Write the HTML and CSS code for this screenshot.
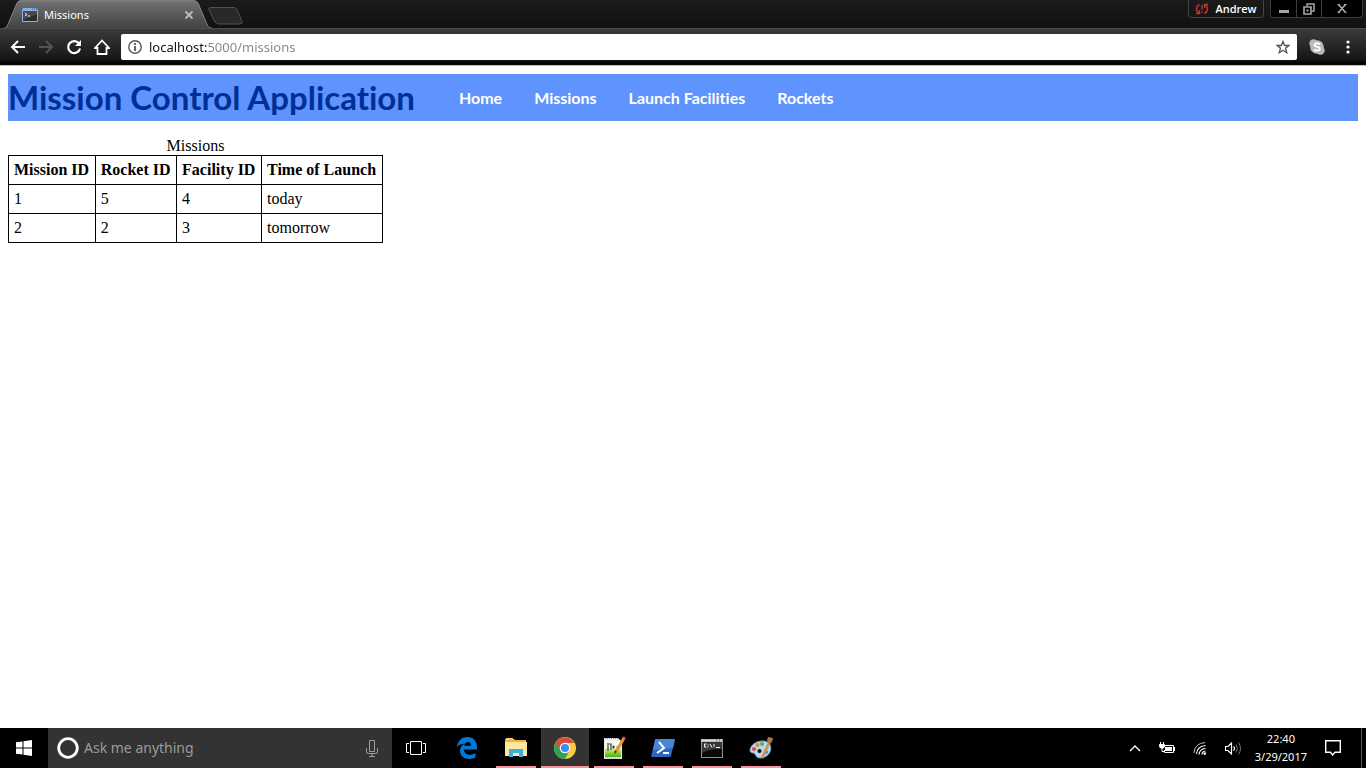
FILE: index.html
```html
<!DOCTYPE html>
<html lang="en">
<head>
<meta charset="utf-8">
<title>Missions</title>
<link rel="stylesheet" href="styles.css">
</head>
<body>
<div class="desktop">
  <header class="chrome">
    <div class="tabs">
      <div class="tab">
        <svg class="tab-shape" width="212" height="28" viewBox="0 0 212 28" aria-hidden="true">
          <defs><linearGradient id="tabfill" x1="0" y1="0" x2="0" y2="1"><stop offset="0" stop-color="#737373"/><stop offset="1" stop-color="#434343"/></linearGradient></defs>
          <path d="M4 28C6 28 7 27 9 22L17 3Q18 0 21 0H193Q197 0 198 3L206 22C208 27 209 28 212 28Z" fill="url(#tabfill)"/>
          <path d="M4 28C6 28 7 27 9 22L17 3Q18 1 21 1H193Q197 1 198 3L206 22C208 27 209 28 212 28" fill="none" stroke="#858585"/>
        </svg>
        <div class="tab-content">
          <svg width="16" height="14" viewBox="0 0 16 14" aria-hidden="true"><rect width="16" height="14" rx="1" fill="#8fb1dd"/><rect y="0" width="16" height="2" fill="#5581bd"/><path d="M1 1h9M11 1h1M13 1h1" stroke="#bcd7fa"/><path d="M1 3h14v10H1Z" fill="#292d32"/><path d="M1 3h14v3L1 12Z" fill="#464a50"/><path d="M3 5l2 1.500L3 8M6 8h2" fill="none" stroke="#fff"/></svg>
          <span class="tab-title">Missions</span>
          <button class="plain close" aria-label="Close tab"><svg width="10" height="10" viewBox="0 0 10 10"><path d="M1.500 1.500l7 7M8.500 1.500l-7 7" stroke="#bdbdbd" stroke-width="1.800"/></svg></button>
        </div>
      </div>
      <button class="plain newtab" aria-label="New tab"><svg width="36" height="18" viewBox="0 0 36 18"><path d="M3 .5H26Q28 .5 29 3L34 14Q35 17 32 17H11Q8 17 7 15L1 3Q0 .5 3 .5Z" fill="#292929" stroke="#515151"/></svg></button>
      <div class="window-controls">
        <button class="plain user"><svg width="14" height="12" viewBox="0 0 14 12" aria-hidden="true"><path d="M4.500 1.500Q1.500 3 1.500 6Q1.500 8.500 4 10M1 10.500h3.500v-3.500M9.500 10.500Q12.500 9 12.500 6Q12.500 3.500 10 2M13 1.500H9.500V5" fill="none" stroke="#c43529" stroke-width="1.400"/><path d="M7 2v5M7 8.500v1.500" stroke="#c43529" stroke-width="1.400"/></svg><span>Andrew</span></button>
        <div class="window-buttons">
          <button class="plain" aria-label="Minimize"><svg width="12" height="12" viewBox="0 0 12 12"><path d="M1 8.500h10" stroke="#a5a5a5" stroke-width="3"/></svg></button>
          <button class="plain" aria-label="Restore"><svg width="12" height="12" viewBox="0 0 12 12"><path d="M4 3V1h7v7H9" fill="none" stroke="#a5a5a5" stroke-width="1.500"/><path d="M1 4h7v7H1Z" fill="none" stroke="#a5a5a5" stroke-width="1.700"/><path d="M3.500 6.500h2v2h-2Z" fill="#a5a5a5"/></svg></button>
          <button class="plain wide" aria-label="Close"><svg width="10" height="9" viewBox="0 0 10 9"><path d="M1.500 .5l7 8M8.500 .5l-7 8M.5 .5h2.500M7 .5h2.500M.5 8.500h2.500M7 8.500h2.500" stroke="#aaa" stroke-width="1.600"/></svg></button>
        </div>
      </div>
    </div>
    <div class="toolbar">
      <button class="plain" aria-label="Back"><svg width="16" height="16" viewBox="0 0 16 16"><path d="M15 8H2M8 2L2 8l6 6" fill="none" stroke="#fff" stroke-width="2"/></svg></button>
      <button class="plain" aria-label="Forward"><svg width="16" height="16" viewBox="0 0 16 16"><path d="M1 8h13M8 2l6 6-6 6" fill="none" stroke="#565656" stroke-width="2"/></svg></button>
      <button class="plain" aria-label="Reload"><svg width="16" height="16" viewBox="0 0 16 16"><path d="M13 4.500A6 6 0 1 0 14 9.500" fill="none" stroke="#fff" stroke-width="2.200"/><path d="M15 1v6H9Z" fill="#fff"/></svg></button>
      <button class="plain" aria-label="Home"><svg width="16" height="16" viewBox="0 0 16 16"><path d="M1 9l7-7.500L15 9h-2.500v6h-9V9Z" fill="none" stroke="#fff" stroke-width="1.800"/></svg></button>
      <div class="address">
        <svg width="14" height="14" viewBox="0 0 14 14" aria-hidden="true"><circle cx="7" cy="7" r="6.200" fill="none" stroke="#555" stroke-width="1.400"/><path d="M7 3v2M7 6v5" stroke="#555" stroke-width="1.800"/></svg>
        <input class="url" type="text" value="localhost:5000/missions" aria-label="Address">
        <button class="plain" aria-label="Bookmark"><svg width="14" height="14" viewBox="0 0 14 14"><path d="M7 1.500l1.600 4h4.300L9.500 8.200l1.300 4.500L7 10.200l-3.800 2.500 1.300-4.500L1.100 5.500h4.300Z" fill="none" stroke="#555" stroke-width="1.300"/></svg></button>
      </div>
      <button class="plain" aria-label="Skype"><svg width="16" height="16" viewBox="0 0 16 16"><circle cx="8" cy="8" r="6.800" fill="#b9b9b9"/><circle cx="4.500" cy="4.500" r="4.200" fill="#b9b9b9"/><circle cx="11.500" cy="11.500" r="4.200" fill="#b9b9b9"/><path d="M11 5.500Q9.500 3.800 7 4.400C4.800 5 5 7.200 7.500 7.600C12 8.300 11.300 11 8.800 11.500Q6.500 12 5 10.300" fill="none" stroke="#fff" stroke-width="1.900"/></svg></button>
      <button class="plain menu" aria-label="Menu"><svg width="4" height="14" viewBox="0 0 4 14"><circle cx="2" cy="2" r="1.600" fill="#fff"/><circle cx="2" cy="7" r="1.600" fill="#fff"/><circle cx="2" cy="12" r="1.600" fill="#fff"/></svg></button>
    </div>
  </header>

  <main class="page">
    <div class="banner">
      <h1>Mission Control Application</h1>
      <nav><a href="#">Home</a><a href="#">Missions</a><a href="#">Launch Facilities</a><a href="#">Rockets</a></nav>
    </div>
    <table class="missions">
      <caption>Missions</caption>
      <thead><tr><th scope="col">Mission ID</th><th scope="col">Rocket ID</th><th scope="col">Facility ID</th><th scope="col">Time of Launch</th></tr></thead>
      <tbody>
        <tr><td>1</td><td>5</td><td>4</td><td>today</td></tr>
        <tr><td>2</td><td>2</td><td>3</td><td>tomorrow</td></tr>
      </tbody>
    </table>
  </main>

  <footer class="taskbar">
    <button class="plain start" aria-label="Start"><svg width="16" height="16" viewBox="0 0 16 16"><path d="M0 2.300L6.500 1.400V7.500H0ZM7.500 1.200L16 0v7.500H7.500ZM0 8.500h6.500v6.100L0 13.700ZM7.500 8.500H16V16l-8.500-1.200Z" fill="#fff"/></svg></button>
    <div class="search">
      <svg width="22" height="22" viewBox="0 0 22 22" aria-hidden="true"><circle cx="11" cy="11" r="9.300" fill="none" stroke="#fff" stroke-width="2.800"/></svg>
      <input type="text" placeholder="Ask me anything" aria-label="Ask me anything">
      <button class="plain" aria-label="Dictate"><svg width="12" height="17" viewBox="0 0 12 17"><path d="M3.500 .5h5v11h-5ZM.5 8v3.500q0 2 2 2h7q2 0 2-2V8M6 13.500v3M3 16.500h6" fill="none" stroke="#a0a0a0"/></svg></button>
    </div>
    <div class="apps">
      <button class="plain app task-view" aria-label="Task view"><svg width="20" height="14" viewBox="0 0 20 14"><path d="M4.500 .5h11v13h-11ZM3 2.500H.5v9H3M17 2.500h2.500v9H17" fill="none" stroke="#fff"/></svg></button>
      <button class="plain app" aria-label="Edge"><svg width="20" height="22" viewBox="0 0 20 22"><path d="M0 10C1 3 5 0 10.500 0C17 0 20 5 20 10v2.500H7c.3 6 7 6.500 11.500 3.500v4.500C11 24 3 21 3 14c0-3.500 2-6 4.500-7.300C4.500 6.800 2 7.500 0 10ZM7.200 8.800H14C14 3.500 8 4 7.200 8.800Z" fill="#0078d7"/></svg></button>
      <button class="plain app open" aria-label="File Explorer"><svg width="22" height="20" viewBox="0 0 22 20"><path d="M0 1h9l1 1h11v16H0Z" fill="#e8b64b"/><path d="M1 0h7v2H1Z" fill="#f6c85f"/><path d="M0 4h22v14H0Z" fill="#ffe79b"/><path d="M4 19v-8h14v8h-4v-4H8v4Z" fill="#3bb0e5"/></svg></button>
      <button class="plain app open current" aria-label="Chrome"><svg width="22" height="22" viewBox="0 0 22 22"><circle cx="11" cy="11" r="11" fill="#f9cc45"/><path d="M11 11L1.500 5.500A11 11 0 0 0 11 22L15.500 13.500Z" fill="#27a35a"/><path d="M1.500 5.500A11 11 0 0 1 20.500 6H11L6.500 13.500Z" fill="#dd4b3e"/><circle cx="11" cy="11" r="5.300" fill="#fff"/><circle cx="11" cy="11" r="4.100" fill="#438af1"/></svg></button>
      <button class="plain app open" aria-label="Notepad++"><svg width="24" height="24" viewBox="0 0 24 24"><defs><linearGradient id="note" x1="0" y1="0" x2="0" y2="1"><stop offset=".4" stop-color="#f7f9ef"/><stop offset=".7" stop-color="#9bd43e"/><stop offset="1" stop-color="#42b61d"/></linearGradient></defs><path d="M2 2h14l4 4v17H2Z" fill="#eee"/><path d="M3 5h16v16H3Z" fill="url(#note)"/><path d="M3 2.500h13M3 22h16" stroke="#999" stroke-dasharray="1 1"/><path d="M6 7v8M7 8h2v6M10 11h3M11.500 9.500v3M14.500 11h3" fill="none" stroke="#344329" stroke-width="1.200"/><path d="M22 2l-8 14" stroke="#e59829" stroke-width="3"/><path d="M21 1l2.500 1.500" stroke="#c44b43" stroke-width="2"/><path d="M13 14l-1 4 3-2" fill="#3d3326"/></svg></button>
      <button class="plain app open" aria-label="PowerShell"><svg width="24" height="18" viewBox="0 0 24 18"><path d="M5 0h18q1 0 .8 1L20 17q-.2 1-1 1H1q-1 0-.8-1L4 1q.2-1 1-1Z" fill="#2f66bd"/><path d="M5 0h18q1 0 .8 1L22 9 2 11 4 1Z" fill="#4b83d6"/><path d="M8 3l5 6-7 5M12 14h6" fill="none" stroke="#fff" stroke-width="2"/></svg></button>
      <button class="plain app open" aria-label="Command Prompt"><svg width="22" height="19" viewBox="0 0 22 19"><rect width="22" height="19" fill="#8d9193"/><path d="M0 1.500h15M16 1.500h2M19 1.500h2" stroke="#d8e2ea" stroke-width="2"/><path d="M1 3h20v15H1Z" fill="#090909"/><path d="M1 3h20v7Q8 10 1 14Z" fill="#373737"/><path d="M5.500 5H3.500v3h2M7 5.500v1M7 7.500v1M9 5l2 3.500M12.500 5l1 1.500-1 1.500M15 8.500h4" fill="none" stroke="#fff"/></svg></button>
      <button class="plain app open" aria-label="Paint"><svg width="24" height="24" viewBox="0 0 24 24"><path d="M1 14C2 8 8 5 14 5c7 0 9 6 7 11-2 4-6 6-10 6-5 0-4-5-7-5-2 0-3-1-3-3Z" fill="#b9d8ef" stroke="#6c9fc3"/><circle cx="5" cy="13" r="2" fill="#d74b40"/><circle cx="8.500" cy="9" r="2" fill="#e9843a"/><circle cx="13" cy="8" r="2" fill="#61ae4e"/><circle cx="17" cy="16" r="2" fill="#438fd7"/><circle cx="10.500" cy="15" r="2" fill="#111"/><path d="M21 5L13 22" stroke="#df8d36" stroke-width="2.500"/><path d="M18 4l1-3 5 1-1 4-3 2Z" fill="#9e7952"/></svg></button>
    </div>
    <div class="tray">
      <div class="status">
        <button class="plain" aria-label="Show hidden icons"><svg width="12" height="8" viewBox="0 0 12 8"><path d="M1 7l5-5 5 5" fill="none" stroke="#fff" stroke-width="1.400"/></svg></button>
        <svg width="16" height="12" viewBox="0 0 16 12" aria-label="Battery"><path d="M4.500 3.500h10v7h-9V8M15.500 5v4" fill="none" stroke="#fff"/><path d="M6 5h7v4H6Z" fill="#fff"/><path d="M1.500 0v2M4.500 0v2M.5 2.500h5v2l-1 1.500h-3L.5 4.500Z" fill="#fff" stroke="#fff"/><path d="M3 6v3.500h2" fill="none" stroke="#fff"/></svg>
        <svg width="14" height="14" viewBox="0 0 14 14" aria-label="Wi-Fi"><path d="M3.500 13Q4 5.500 12.500 4.500M6 13.500Q6.500 8 12.500 7.500M9 13.500q0-3 3.500-3.500" fill="none" stroke="#fff" stroke-width="1.200"/><path d="M1 12Q1.500 2.500 12 1.500" fill="none" stroke="#bbb"/><circle cx="11.800" cy="12.600" r="1.300" fill="#fff"/></svg>
        <svg width="16" height="13" viewBox="0 0 16 13" aria-label="Volume"><path d="M.5 4.500H3L6.500 1v11L3 8.500H.5ZM8.500 4.500q2 2 0 4" fill="none" stroke="#fff" stroke-width="1.200"/><path d="M11 2.500q3 4 0 8M13.500 .5q4 6 0 12" fill="none" stroke="#777"/></svg>
      </div>
      <time class="clock" datetime="2017-03-29T22:40"><span>22:40</span><span>3/29/2017</span></time>
      <button class="plain" aria-label="Notifications"><svg width="16" height="16" viewBox="0 0 16 16"><path d="M.7 .7h14.600v11.600H10L7.500 15 5.500 12.300H.7Z" fill="none" stroke="#fff" stroke-width="1.400"/></svg></button>
      <span class="show-desktop"></span>
    </div>
  </footer>
</div>
</body>
</html>
```
FILE: styles.css
```css
* { box-sizing: border-box; }
body { margin: 0; background: #fff; }
svg { display: block; flex: none; }
.desktop { display: flex; flex-direction: column; min-height: 100vh; }
.plain { display: flex; align-items: center; justify-content: center; padding: 0; border: 0; background: none; color: inherit; font: inherit; }
.chrome { font-family: "Noto Sans", "Open Sans", sans-serif; }
.tabs { display: flex; height: 28px; background: linear-gradient(#1b1b1b, #111); }
.tab { display: grid; }
.tab-shape, .tab-content { grid-area: 1 / 1; }
.tab-content { display: flex; align-items: center; padding: 1px 18px 0 22px; gap: 6px; color: #fff; font-size: 11px; }
.close { margin-left: auto; }
.newtab { margin: 7px 0 0 -4px; height: 18px; }
.window-controls { display: flex; align-items: flex-start; gap: 6px; margin-left: auto; padding-right: 3px; color: #fff; font-size: 11px; font-weight: 600; }
.user { width: 76px; height: 18px; gap: 6px; border: 1px solid #444; border-top: 0; border-radius: 0 0 4px 4px; font-family: "Open Sans", sans-serif; }
.window-buttons { display: flex; height: 18px; background: #000; border: 1px solid #3c3c3c; border-top: 0; border-radius: 0 0 4px 4px; }
.window-buttons .plain { width: 25px; }
.window-buttons .plain + .plain { border-left: 1px solid #3c3c3c; }
.window-buttons .wide { width: 41px; }
.toolbar { display: flex; align-items: center; gap: 12px; height: 38px; padding: 1px 16px 2px 10px; background: linear-gradient(#3b3b3b, #151515 31px, #080808 33px, #000 34px, #0b0b0b); border-top: 1px solid #4c4c4c; border-bottom: 1px solid #bbb; }
.address { display: flex; flex: 1; align-items: center; gap: 7px; height: 26px; margin-left: -1px; padding: 0 7px; border-radius: 2px; background: #fff; }
.url { flex: 1; min-width: 0; padding: 0; border: 0; outline: 0; font: 13px/20px "Noto Sans", "Open Sans", sans-serif; color: transparent; background: linear-gradient(90deg, #111 58px, #858585 58px) text; }
.menu { margin-left: 9px; }
.page { flex: 1; padding: 8px; font: 16px/18px "Liberation Serif", "Times New Roman", serif; }
.banner { display: flex; align-items: center; gap: 44px; height: 47px; margin-bottom: 16px; background: #5f93fd; font-family: "Trebuchet MS", Lato, sans-serif; font-variant-ligatures: none; }
.banner h1 { margin: 0; color: #002f96; font-size: 33px; font-weight: 700; line-height: 47px; white-space: nowrap; }
.banner nav { display: flex; gap: 32px; white-space: nowrap; }
.banner a { color: #fff; font-size: 16px; font-weight: 700; text-decoration: none; }
.missions { width: 375px; border-collapse: collapse; }
.missions th, .missions td { padding: 5px; border: 1px solid #000; text-align: left; }
.taskbar { display: flex; height: 40px; background: #000; color: #fff; font-family: "Noto Sans", "Open Sans", sans-serif; }
.start { width: 48px; }
.search { display: flex; align-items: center; gap: 5px; width: 344px; padding: 0 14px 0 9px; background: #333; }
.search input { flex: 1; min-width: 0; padding: 0; border: 0; outline: 0; background: none; color: #fff; font: 14px/20px "Noto Sans", "Open Sans", sans-serif; }
.search input::placeholder { color: #9b9b9b; opacity: 1; }
.apps { display: flex; gap: 1px; }
.app { width: 48px; height: 40px; }
.task-view { margin-right: 2px; }
.open { background: linear-gradient(#fb9199, #fb9199) bottom / 40px 2px no-repeat; }
.current { background: linear-gradient(#fb9199, #fb9199) bottom / 100% 2px no-repeat #333; }
.tray { display: flex; align-items: center; margin-left: auto; gap: 18px; }
.status { display: flex; align-items: center; gap: 18px; margin-right: -4px; }
.clock { display: flex; flex-direction: column; align-items: center; font-size: 11px; line-height: 18px; }
.show-desktop { align-self: stretch; width: 5px; margin-left: 2px; border-left: 1px solid #555; }
```
